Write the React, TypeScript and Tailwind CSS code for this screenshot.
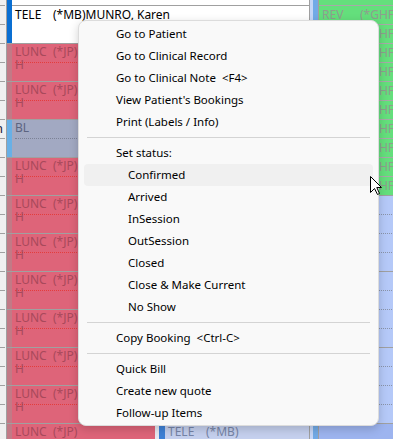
import React from "react";

const GRID_FONT = "font-['Noto_Sans',sans-serif]";

function LunchBlock({ code, second, label }: { code: string; second?: string; label: string }) {
  return (
    <div className="relative h-[38px] shrink-0 border-t border-[#a0a0a0] flex bg-[#de6479]">
      <div className="w-[5px] bg-[#c27a86]" />
      <div className="flex-1 flex flex-col">
        <div className="h-[18px]" />
        <div className="h-[19px] border-t border-dotted border-[#e43c3c] ml-[3px]" />
      </div>
      <div className={`absolute left-[8px] top-[1px] flex text-[12px] leading-[13px] text-[#a8495b] ${GRID_FONT}`}>
        <div className="w-[38px] flex flex-col">
          <span>{code}</span>
          {second && <span>{second}</span>}
        </div>
        <span>{label}</span>
      </div>
    </div>
  );
}

function BLBlock() {
  return (
    <div className="relative h-[38px] shrink-0 border-t border-[#a0a0a0] flex bg-[#a2a9c2]">
      <div className="w-[5px] bg-[#68b0e6]" />
      <div className="flex-1 flex flex-col">
        <div className="h-[18px]" />
        <div className="h-[19px] border-t border-dotted border-[#7c8296] ml-[3px]" />
      </div>
      <div className={`absolute left-[8px] top-[1px] text-[12px] leading-[13px] text-[#5c6480] ${GRID_FONT}`}>BL</div>
    </div>
  );
}

type Item =
  | { kind: "item"; text: string; sub?: boolean; hover?: boolean; header?: boolean }
  | { kind: "sep" };

const items: Item[] = [
  { kind: "item", text: "Go to Patient" },
  { kind: "item", text: "Go to Clinical Record" },
  { kind: "item", text: "Go to Clinical Note  <F4>" },
  { kind: "item", text: "View Patient's Bookings" },
  { kind: "item", text: "Print (Labels / Info)" },
  { kind: "sep" },
  { kind: "item", text: "Set status:", header: true },
  { kind: "item", text: "Confirmed", sub: true, hover: true },
  { kind: "item", text: "Arrived", sub: true },
  { kind: "item", text: "InSession", sub: true },
  { kind: "item", text: "OutSession", sub: true },
  { kind: "item", text: "Closed", sub: true },
  { kind: "item", text: "Close & Make Current", sub: true },
  { kind: "item", text: "No Show", sub: true },
  { kind: "sep" },
  { kind: "item", text: "Copy Booking  <Ctrl-C>" },
  { kind: "sep" },
  { kind: "item", text: "Quick Bill" },
  { kind: "item", text: "Create new quote" },
  { kind: "item", text: "Follow-up Items" },
];

export default function App() {
  const ticks = Array.from({ length: 23 }, (_, i) => i);
  const greenRows = Array.from({ length: 10 }, (_, i) => i);
  const blueRows = Array.from({ length: 12 }, (_, i) => i);
  const lunchLower = Array.from({ length: 7 }, (_, i) => i);

  return (
    <div className="relative w-[393px] h-[439px] overflow-hidden bg-white flex">
      {/* time column */}
      <div className="w-[7px] shrink-0 bg-[#f0f0f0] border-r border-[#a0a0a0] overflow-hidden flex flex-col">
        <div className="h-[5px] shrink-0" />
        {ticks.map((i) => (
          <div key={i} className="h-[19px] shrink-0 relative">
            <div className="w-[5px] border-t border-[#a0a0a0]" />
            {i === 6 && (
              <span className={`absolute left-[-5px] top-[0px] text-[13px] leading-[18px] text-[#1c1c3c] ${GRID_FONT}`}>n</span>
            )}
          </div>
        ))}
      </div>

      {/* column A */}
      <div className="w-[303px] shrink-0 border-r border-[#a0a0a0] flex flex-col">
        <div className="h-[43px] shrink-0 flex">
          <div className="w-[5px] bg-[#0a6fd2]" />
          <div className="flex-1 bg-white flex flex-col">
            <div className="h-[5px]" />
            <div className={`h-[19px] border-t border-[#a0a0a0] flex items-center pl-[3px] text-[12px] text-black ${GRID_FONT}`}>
              <span className="w-[38px]">TELE</span>
              <span>(*MB)MUNRO, Karen</span>
            </div>
          </div>
        </div>
        <div className="flex-1 flex">
          <div className="w-[148px] shrink-0 flex flex-col">
            <LunchBlock code="LUNC" second="H" label="(*JP)" />
            <LunchBlock code="LUNC" second="H" label="(*JP)" />
            <BLBlock />
            {lunchLower.map((i) => (
              <LunchBlock key={i} code="LUNC" second="H" label="(*JP)" />
            ))}
            <LunchBlock code="LUNC" second="H" label="(*JP)" />
          </div>
          <div className="w-[4px] shrink-0 bg-[#e6e8f0]" />
          <div className="flex-1 flex flex-col">
            <div className="h-[380px] shrink-0 bg-white" />
            <div className="h-[38px] shrink-0 border-t border-[#a0a0a0] flex bg-[#c5d0ee]">
              <div className="w-[6px] bg-[#3d80d6]" />
              <div className={`pl-[3px] flex text-[12px] leading-[13px] pt-[1px] text-[#7684a6] ${GRID_FONT}`}>
                <span className="w-[38px]">TELE</span>
                <span>(*MB)</span>
              </div>
            </div>
          </div>
        </div>
      </div>

      {/* narrow strip */}
      <div className="w-[8px] shrink-0 flex">
        <div className="w-[3px] bg-[#c6d6f6]" />
        <div className="w-[5px] bg-[#72aae6]" />
      </div>

      {/* column B */}
      <div className="flex-1 border-l border-[#a0a0a0] flex flex-col">
        <div className="h-[5px] shrink-0 bg-[#64df7c]" />
        {greenRows.map((i) => (
          <div
            key={i}
            className={`h-[19px] shrink-0 border-t border-[#a8a8a8] bg-[#64df7c] flex items-center pl-[3px] whitespace-nowrap text-[12px] text-[#8e9e8e] ${GRID_FONT}`}
          >
            <span className="w-[38px] shrink-0">REV</span>
            <span>(*GHF)</span>
          </div>
        ))}
        {blueRows.map((i) => (
          <div
            key={i}
            className={`h-[19px] shrink-0 bg-[#b5c9f8] border-t ${
              i % 4 === 0 ? "border-solid border-[#a0a0a0]" : "border-dotted border-[#8a94a8]"
            }`}
          />
        ))}
        <div className="flex-1 bg-[#9db4ef] border-t border-[#a0a0a0]" />
      </div>

      {/* context menu */}
      <div
        className={`absolute left-[78px] top-[20px] w-[301px] rounded-[8px] border border-[#dcdcdc] bg-[#f9f9f9] pt-[2px] pb-[1px] px-[5px] shadow-[0_3px_10px_rgba(0,0,0,0.18)] ${GRID_FONT}`}
      >
        {items.map((it, idx) =>
          it.kind === "sep" ? (
            <div key={idx} className="h-[9px] flex items-center px-[3px]">
              <div className="w-full border-t border-[#d4d4d4]" />
            </div>
          ) : (
            <div
              key={idx}
              className={`h-[22px] flex items-center rounded-[4px] whitespace-pre text-[11.5px] text-black ${
                it.sub ? "pl-[44px]" : "pl-[32px]"
              } ${it.hover ? "bg-[#f0f0f0]" : ""}`}
            >
              {it.text}
            </div>
          )
        )}
      </div>

      {/* mouse cursor */}
      <svg className="absolute left-[370px] top-[176px]" width="13" height="20" viewBox="0 0 13 20">
        <path
          d="M0.5 0.5 V16.5 L4.5 12.5 L7.5 18.5 L9.5 17.5 L6.8 11.5 H11.5 Z"
          fill="white"
          stroke="black"
          strokeWidth="1"
          strokeLinejoin="miter"
        />
      </svg>
    </div>
  );
}
